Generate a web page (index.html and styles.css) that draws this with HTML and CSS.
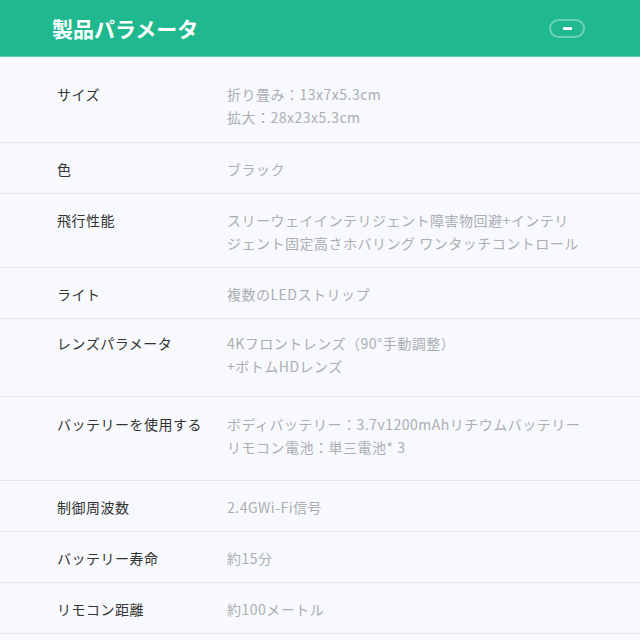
FILE: index.html
```html
<!DOCTYPE html>
<html lang="ja">

<head>
  <meta charset="UTF-8" />
  <meta name="viewport" content="width=device-width, initial-scale=1.0" />
  <title>製品パラメータ</title>
  <link rel="stylesheet" href="styles.css">
</head>

<body>
  <div class="header">
    <h2>製品パラメータ</h2>
    <button class="toggle"><span></span></button>
  </div>

  <div class="params">
    <div class="row first">
      <div class="label">サイズ</div>
      <div class="value">折り畳み：13x7x5.3cm<br>拡大：28x23x5.3cm</div>
    </div>
    <div class="row">
      <div class="label">色</div>
      <div class="value">ブラック</div>
    </div>
    <div class="row">
      <div class="label">飛行性能</div>
      <div class="value">スリーウェイインテリジェント障害物回避+インテリジェント固定高さホバリング ワンタッチコントロール</div>
    </div>
    <div class="row">
      <div class="label">ライト</div>
      <div class="value">複数のLEDストリップ</div>
    </div>
    <div class="row lens">
      <div class="label">レンズパラメータ</div>
      <div class="value">4Kフロントレンズ（90°手動調整）<br>+ボトムHDレンズ</div>
    </div>
    <div class="row battery">
      <div class="label">バッテリーを使用する</div>
      <div class="value">ボディバッテリー：3.7v1200mAhリチウムバッテリー<br>リモコン電池：単三電池* 3</div>
    </div>
    <div class="row">
      <div class="label">制御周波数</div>
      <div class="value">2.4GWi-Fi信号</div>
    </div>
    <div class="row">
      <div class="label">バッテリー寿命</div>
      <div class="value">約15分</div>
    </div>
    <div class="row">
      <div class="label">リモコン距離</div>
      <div class="value">約100メートル</div>
    </div>
  </div>
</body>

</html>
```

FILE: styles.css
```css
body {
  margin: 0;
  background: #f7f9fc;
  font-family: "Noto Sans CJK JP", "Noto Sans", sans-serif;
  font-size: 14px;
}

.header {
  height: 56px;
  background: #20b98f;
  border-bottom: 1px solid #5fd3b4;
  display: flex;
  align-items: center;
  justify-content: space-between;
  padding: 0 55px 0 52px;
}

.header h2 {
  margin: 0;
  color: #fff;
  font-size: 21px;
  font-weight: bold;
}

.toggle {
  width: 36px;
  height: 19px;
  border: 2px solid rgba(255, 255, 255, 0.35);
  border-radius: 10px;
  background: transparent;
  display: flex;
  align-items: center;
  justify-content: center;
  padding: 0;
}

.toggle span {
  width: 9px;
  height: 3px;
  border-radius: 1px;
  background: #fff;
}

.params {
  display: flex;
  flex-direction: column;
}

.row {
  display: flex;
  padding: 15px 58px 12px 57px;
  border-bottom: 1px solid #e3e7ec;
  line-height: 23px;
  letter-spacing: 0.5px;
}

.row.first {
  padding-top: 26px;
  padding-bottom: 13px;
}

.row.lens {
  padding-top: 13px;
  padding-bottom: 18px;
}

.row.battery {
  padding-top: 16px;
  padding-bottom: 21px;
}

.label {
  width: 170px;
  flex-shrink: 0;
  color: #333;
}

.value {
  color: #abaeb3;
}
```
